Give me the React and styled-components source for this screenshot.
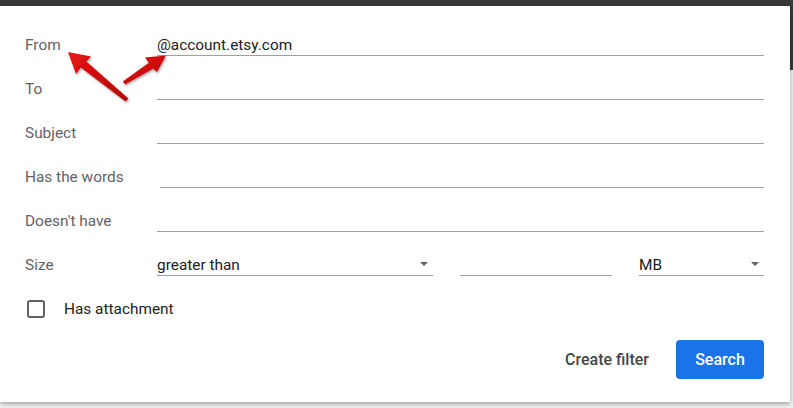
import React from "react";
import styled, { createGlobalStyle } from "styled-components";

const GlobalStyle = createGlobalStyle`
    html, body {
        margin: 0;
        padding: 0;
    }
    body {
        font-family: Roboto, "Liberation Sans", Arial, sans-serif;
        background: #f3f3f3;
    }
`;

const Backdrop = styled.div`
    position: relative;
    width: 793px;
    height: 408px;
    overflow: hidden;
    background: #f3f3f3;
`;

const DarkHeader = styled.div`
    height: 70px;
    background: #3a3a3a;
`;

const Panel = styled.div`
    position: absolute;
    left: 0;
    top: 6px;
    width: 790px;
    height: 396px;
    background: #ffffff;
    box-shadow: 0 2px 4px rgba(0, 0, 0, 0.25), 0 1px 8px rgba(0, 0, 0, 0.12);
    box-sizing: border-box;
    padding: 6px 26px 0 25px;
    display: flex;
    flex-direction: column;
`;

const Row = styled.div`
    height: 44px;
    display: flex;
    align-items: flex-end;
`;

const Label = styled.div`
    width: ${(p) => 132 + (p.$extra || 0)}px;
    flex-shrink: 0;
    height: 24px;
    line-height: 27px;
    font-size: 15.4px;
    color: #5f6368;
`;

const Field = styled.div`
    flex: ${(p) => (p.$width ? "0 0 auto" : "1")};
    width: ${(p) => (p.$width ? `${p.$width}px` : "auto")};
    height: 24px;
    box-sizing: border-box;
    border-bottom: 1px solid #9aa0a6;
    font-size: 15.4px;
    line-height: 20px;
    padding-top: 3px;
    color: #202124;
    display: flex;
    align-items: center;
    justify-content: space-between;
    padding-right: 5px;
`;

const Caret = styled.span`
    width: 0;
    height: 0;
    border-left: 4.5px solid transparent;
    border-right: 4.5px solid transparent;
    border-top: 4.5px solid #5f6368;
    margin-bottom: 2px;
`;

const SizeGroup = styled.div`
    flex: 1;
    display: flex;
    align-items: flex-end;
    gap: 27px;
`;

const CheckRow = styled(Row)`
    align-items: center;
    padding-top: 20px;
    box-sizing: border-box;
`;

const Checkbox = styled.span`
    width: 14px;
    height: 14px;
    margin-left: 2px;
    margin-top: 1px;
    border: 2px solid #5f6368;
    border-radius: 3px;
    flex-shrink: 0;
`;

const CheckLabel = styled.span`
    margin-left: 19px;
    margin-top: 2px;
    font-size: 15.4px;
    color: #202124;
`;

const Footer = styled.div`
    display: flex;
    justify-content: flex-end;
    align-items: center;
    gap: 27px;
    margin-top: 20px;
`;

const TextButton = styled.button`
    border: none;
    background: none;
    padding: 0;
    font-family: inherit;
    font-size: 16px;
    font-weight: 500;
    color: #444746;
`;

const PrimaryButton = styled.button`
    width: 88px;
    height: 39px;
    border: none;
    border-radius: 4px;
    background: #1a73e8;
    color: #ffffff;
    font-family: inherit;
    font-size: 16px;
    font-weight: 500;
`;

const ArrowLayer = styled.svg`
    position: absolute;
    left: 0;
    top: -6px;
    pointer-events: none;
    overflow: visible;
`;

function Arrows() {
    return (
        <ArrowLayer width="200" height="120" viewBox="0 0 200 120">
            <defs>
                <linearGradient id="red" x1="0" y1="0" x2="1" y2="1">
                    <stop offset="0" stopColor="#e81414" />
                    <stop offset="1" stopColor="#b00808" />
                </linearGradient>
                <filter id="shade" x="-20%" y="-20%" width="140%" height="140%">
                    <feDropShadow dx="1" dy="1.5" stdDeviation="1.2" floodColor="#000" floodOpacity="0.35" />
                </filter>
            </defs>
            <g fill="url(#red)" filter="url(#shade)">
                <polygon points="68,52 91,56.5 86.4,61.6 128.4,98.4 125.6,101.6 80.8,67.6 76,74" />
                <polygon points="166,55.5 145,57.5 148.8,62.8 122.8,81.4 125.2,84.6 153,68.8 157,72" />
            </g>
        </ArrowLayer>
    );
}

export default function App() {
    const fields = [
        { label: "From", value: "@account.etsy.com" },
        { label: "To" },
        { label: "Subject" },
        { label: "Has the words", extra: 3 },
        { label: "Doesn't have" },
    ];

    return (
        <Backdrop>
            <GlobalStyle />
            <DarkHeader />
            <Panel>
                {fields.map((f) => (
                    <Row key={f.label}>
                        <Label $extra={f.extra}>{f.label}</Label>
                        <Field>{f.value}</Field>
                    </Row>
                ))}
                <Row>
                    <Label>Size</Label>
                    <SizeGroup>
                        <Field $width={276}>
                            greater than
                            <Caret />
                        </Field>
                        <Field $width={152} />
                        <Field $width={125}>
                            MB
                            <Caret />
                        </Field>
                    </SizeGroup>
                </Row>
                <CheckRow>
                    <Checkbox />
                    <CheckLabel>Has attachment</CheckLabel>
                </CheckRow>
                <Footer>
                    <TextButton>Create filter</TextButton>
                    <PrimaryButton>Search</PrimaryButton>
                </Footer>
                <Arrows />
            </Panel>
        </Backdrop>
    );
}
